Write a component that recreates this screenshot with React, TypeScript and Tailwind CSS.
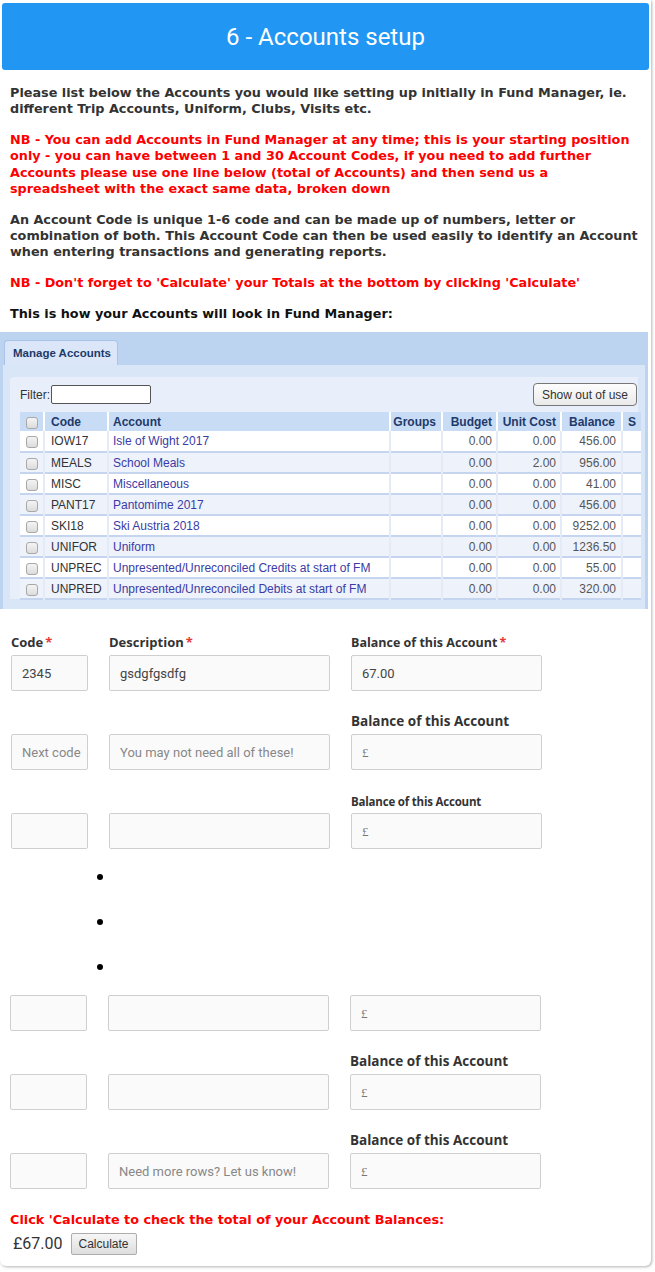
import React from 'react'

const rows = [
  { code: 'IOW17', name: 'Isle of Wight 2017', budget: '0.00', unit: '0.00', bal: '456.00' },
  { code: 'MEALS', name: 'School Meals', budget: '0.00', unit: '2.00', bal: '956.00' },
  { code: 'MISC', name: 'Miscellaneous', budget: '0.00', unit: '0.00', bal: '41.00' },
  { code: 'PANT17', name: 'Pantomime 2017', budget: '0.00', unit: '0.00', bal: '456.00' },
  { code: 'SKI18', name: 'Ski Austria 2018', budget: '0.00', unit: '0.00', bal: '9252.00' },
  { code: 'UNIFOR', name: 'Uniform', budget: '0.00', unit: '0.00', bal: '1236.50' },
  { code: 'UNPREC', name: 'Unpresented/Unreconciled Credits at start of FM', budget: '0.00', unit: '0.00', bal: '55.00' },
  { code: 'UNPRED', name: 'Unpresented/Unreconciled Debits at start of FM', budget: '0.00', unit: '0.00', bal: '320.00' },
]

function Check() {
  return <span className="inline-block w-[12px] h-[12px] rounded-[3px] border border-[#a8a8a8] bg-gradient-to-b from-[#f4f4f4] to-[#dcdcdc] align-middle" />
}

function ManageAccounts() {
  return (
    <div className="w-[648px] h-[277px] bg-[#bcd4ef] pt-[8px] font-['Liberation_Sans',sans-serif]">
      <div className="flex pl-[4px]">
        <div className="w-[114px] h-[25px] bg-[#dbe7f8] rounded-t-[4px] border border-b-0 border-[#a9c4e8] text-[11.5px] font-bold text-[#1d3a6b] flex items-center pl-[8px]">
          Manage Accounts
        </div>
      </div>
      <div className="mx-[3px] h-[244px] bg-[#d9e6f7] pt-[12px] px-[7px]">
        <div className="h-[222px] bg-[#e8effa] rounded-tl-[4px] pl-[10px]">
          <div className="flex items-center justify-between h-[35px] pr-[1px]">
            <div className="flex items-center text-[12px] text-[#333]">
              <span>Filter:</span>
              <span className="ml-[1px] w-[100px] h-[19px] bg-white border border-[#555] rounded-[2px]" />
            </div>
            <div className="h-[23px] px-[8px] border border-[#777] rounded-[4px] bg-gradient-to-b from-[#fdfdfd] to-[#eaeaea] text-[12px] text-[#333] flex items-center">
              Show out of use
            </div>
          </div>
          <table className="border-collapse text-[12px] w-[621px] table-fixed">
            <colgroup>
              <col className="w-[24px]" />
              <col className="w-[64px]" />
              <col className="w-[282px]" />
              <col className="w-[52px]" />
              <col className="w-[55px]" />
              <col className="w-[64px]" />
              <col className="w-[61px]" />
              <col className="w-[19px]" />
            </colgroup>
            <thead>
              <tr className="h-[19px] bg-[#c9dcf5] text-[#1d3a6b] font-bold">
                <th className="border-r-2 border-white text-center"><Check /></th>
                <th className="border-r-2 border-white text-left pl-[6px] font-bold">Code</th>
                <th className="border-r-2 border-white text-left pl-[4px] font-bold">Account</th>
                <th className="border-r-2 border-white text-right pr-[5px] font-bold">Groups</th>
                <th className="border-r-2 border-white text-right pr-[4px] font-bold">Budget</th>
                <th className="border-r-2 border-white text-right pr-[4px] font-bold">Unit Cost</th>
                <th className="border-r-2 border-white text-right pr-[6px] font-bold">Balance</th>
                <th className="text-left pl-[5px] font-bold">S</th>
              </tr>
            </thead>
            <tbody>
              {rows.map((r, i) => (
                <tr key={r.code} className={`h-[21px] border-b-2 border-[#c5d4ef] ${i % 2 === 0 ? 'bg-white' : 'bg-[#edf2fb]'}`}>
                  <td className="border-r-2 border-[#e4ebf7] text-center"><Check /></td>
                  <td className="border-r-2 border-[#e4ebf7] pl-[6px] text-[#333]">{r.code}</td>
                  <td className="border-r-2 border-[#e4ebf7] pl-[4px] text-[#3b3ba5] whitespace-nowrap">{r.name}</td>
                  <td className="border-r-2 border-[#e4ebf7]" />
                  <td className="border-r-2 border-[#e4ebf7] text-right pr-[4px] text-[#555]">{r.budget}</td>
                  <td className="border-r-2 border-[#e4ebf7] text-right pr-[4px] text-[#555]">{r.unit}</td>
                  <td className="border-r-2 border-[#e4ebf7] text-right pr-[5px] text-[#555]">{r.bal}</td>
                  <td />
                </tr>
              ))}
            </tbody>
          </table>
        </div>
      </div>
    </div>
  )
}

type RowProps = {
  label?: string
  labelSize?: string
  required?: boolean
  codeLabel?: boolean
  code?: string
  codePh?: string
  desc?: string
  descPh?: string
  bal?: string
  shift?: boolean
  top?: string
}

function FormRow({ label, labelSize = 'text-[13.5px]', required, codeLabel, code, codePh, desc, descPh, bal = '£', shift, top = 'h-[43px]' }: RowProps) {
  const input = 'h-[36px] bg-[#fafafa] border border-[#cfcfcf] rounded-[2px] px-[10px] flex items-center text-[13px] font-["Roboto",sans-serif] overflow-hidden whitespace-nowrap'
  const lbl = "font-bold text-[#333] font-['Open_Sans',sans-serif] leading-none"
  return (
    <div className={`flex gap-[21px] ${shift ? 'pl-[10px]' : 'pl-[11px]'}`}>
      <div className="w-[77px] flex flex-col">
        <div className={`${top} flex items-end pb-[6px]`}>
          {codeLabel && (
            <span className={`text-[13px] ${lbl}`}>Code<span className="text-[#e53935] ml-[2px]">*</span></span>
          )}
        </div>
        <div className={input}>
          {code ? <span className="text-[#444]">{code}</span> : <span className="text-[#888]">{codePh}</span>}
        </div>
      </div>
      <div className="w-[221px] flex flex-col">
        <div className={`${top} flex items-end pb-[6px]`}>
          {codeLabel && (
            <span className={`text-[13px] ${lbl}`}>Description<span className="text-[#e53935] ml-[2px]">*</span></span>
          )}
        </div>
        <div className={input}>
          {desc ? <span className="text-[#444]">{desc}</span> : <span className="text-[#888]">{descPh}</span>}
        </div>
      </div>
      <div className="w-[191px] flex flex-col">
        <div className={`${top} flex items-end pb-[6px]`}>
          {label && (
            <span className={`${labelSize} ${lbl}`}>
              {label}
              {required && <span className="text-[#e53935] ml-[2px]">*</span>}
            </span>
          )}
        </div>
        <div className={input}>
          <span className={bal === '£' ? 'text-[#777] font-["Liberation_Serif",serif]' : 'text-[#444]'}>{bal}</span>
        </div>
      </div>
    </div>
  )
}

export default function App() {
  return (
    <div className="bg-white min-h-[1272px]">
      <div className="w-[651px] bg-white rounded-b-[6px] shadow-[1px_1px_3px_rgba(0,0,0,0.3)] pt-[3px] pb-[10px]">
        <div className="mx-[2px] h-[67px] bg-[#2196f3] rounded-[3px] flex items-center justify-center">
          <h1 className="text-white text-[24px] font-['Roboto',sans-serif]">6 - Accounts setup</h1>
        </div>

        <div className="px-[10px] pt-[15px] pb-[10px] text-[12.8px] leading-[16.3px] font-bold font-['DejaVu_Sans',sans-serif] flex flex-col gap-[14.5px]">
          <p className="text-[#333]">
            Please list below the Accounts you would like setting up initially in Fund Manager, ie. different Trip Accounts, Uniform, Clubs, Visits etc.
          </p>
          <p className="text-[#ff0000]">
            NB - You can add Accounts in Fund Manager at any time; this is your starting position only - you can have between 1 and 30 Account Codes, if you need to add further Accounts please use one line below (total of Accounts) and then send us a spreadsheet with the exact same data, broken down
          </p>
          <p className="text-[#333]">
            An Account Code is unique 1-6 code and can be made up of numbers, letter or combination of both. This Account Code can then be used easily to identify an Account when entering transactions and generating reports.
          </p>
          <p className="text-[#ff0000]">
            NB - Don't forget to 'Calculate' your Totals at the bottom by clicking 'Calculate'
          </p>
          <p className="text-[#111]">This is how your Accounts will look in Fund Manager:</p>
        </div>

        <ManageAccounts />

        <FormRow codeLabel label="Balance of this Account" labelSize="text-[12.5px]" required code="2345" desc="gsdgfgsdfg" bal="67.00" top="h-[46px]" />
        <FormRow label="Balance of this Account" codePh="Next code" descPh="You may not need all of these!" />
        <FormRow label="Balance of this Account" labelSize="text-[11.5px] tracking-[-0.2px]" />

        <ul className="list-disc pl-[115px] mt-[5px] text-[16px]">
          <li className="leading-[45px]">&nbsp;</li>
          <li className="leading-[45px]">&nbsp;</li>
          <li className="leading-[45px]">&nbsp;</li>
        </ul>

        <FormRow shift top="h-[6px]" />
        <FormRow shift label="Balance of this Account" />
        <FormRow shift label="Balance of this Account" descPh="Need more rows? Let us know!" />

        <div className="pl-[10px] pt-[21px]">
          <p className="text-[12.8px] font-bold text-[#ff0000] font-['DejaVu_Sans',sans-serif]">
            Click 'Calculate to check the total of your Account Balances:
          </p>
          <div className="flex items-center gap-[8px] pl-[3px] mt-[3px]">
            <span className="text-[16px] text-[#333] font-['Roboto',sans-serif]">£67.00</span>
            <button className="h-[22px] px-[7px] border border-[#adadad] rounded-[2px] bg-gradient-to-b from-[#f6f6f6] to-[#dedede] text-[12px] text-[#333] font-['Liberation_Sans',sans-serif]">
              Calculate
            </button>
          </div>
        </div>
      </div>
    </div>
  )
}
